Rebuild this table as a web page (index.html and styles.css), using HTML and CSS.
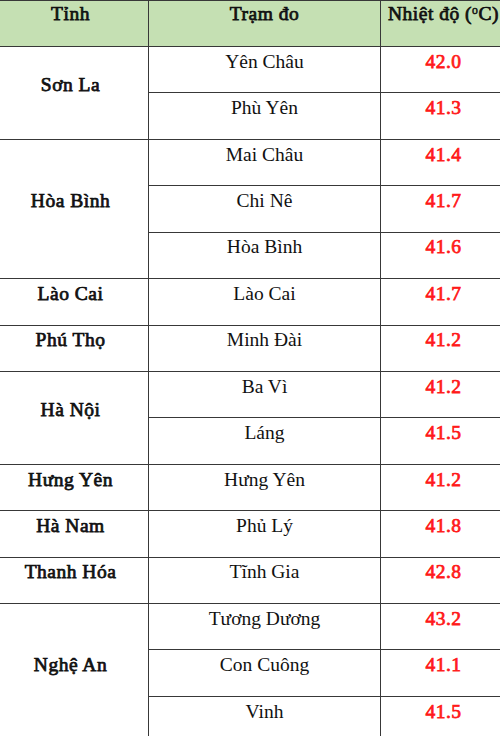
FILE: index.html
```html
<!DOCTYPE html>
<html lang="vi">
<head>
<meta charset="utf-8">
<link rel="stylesheet" href="styles.css">
</head>
<body>
<div class="frame">
<table class="temps">
  <colgroup>
    <col class="c1"><col class="c2"><col class="c3">
  </colgroup>
  <thead>
    <tr><th>Tỉnh</th><th>Trạm đo</th><th>Nhiệt độ (<sup>o</sup>C)</th></tr>
  </thead>
  <tbody>
    <tr><td class="prov" rowspan="2">Sơn La</td><td>Yên Châu</td><td class="val">42.0</td></tr>
    <tr><td>Phù Yên</td><td class="val">41.3</td></tr>
    <tr><td class="prov" rowspan="3">Hòa Bình</td><td>Mai Châu</td><td class="val">41.4</td></tr>
    <tr><td>Chi Nê</td><td class="val">41.7</td></tr>
    <tr><td>Hòa Bình</td><td class="val">41.6</td></tr>
    <tr><td class="prov">Lào Cai</td><td>Lào Cai</td><td class="val">41.7</td></tr>
    <tr><td class="prov">Phú Thọ</td><td>Minh Đài</td><td class="val">41.2</td></tr>
    <tr><td class="prov" rowspan="2">Hà Nội</td><td>Ba Vì</td><td class="val">41.2</td></tr>
    <tr><td>Láng</td><td class="val">41.5</td></tr>
    <tr><td class="prov">Hưng Yên</td><td>Hưng Yên</td><td class="val">41.2</td></tr>
    <tr><td class="prov">Hà Nam</td><td>Phủ Lý</td><td class="val">41.8</td></tr>
    <tr><td class="prov">Thanh Hóa</td><td>Tĩnh Gia</td><td class="val">42.8</td></tr>
    <tr><td class="prov" rowspan="3">Nghệ An</td><td>Tương Dương</td><td class="val">43.2</td></tr>
    <tr><td>Con Cuông</td><td class="val">41.1</td></tr>
    <tr><td>Vinh</td><td class="val">41.5</td></tr>
  </tbody>
</table>
</div>
</body>
</html>
```
FILE: styles.css
```css
html, body {
  margin: 0;
  padding: 0;
  background: #ffffff;
}
.frame {
  width: 500px;
  height: 736px;
  overflow: hidden;
}
.temps {
  border-collapse: collapse;
  table-layout: fixed;
  width: 514px;
  margin-left: -8px;
  font-family: "Liberation Serif", "Times New Roman", serif;
  font-size: 19.5px;
  color: #111;
}
.c1 { width: 156px; }
.c2 { width: 232px; }
.c3 { width: 126px; }
.temps th,
.temps td {
  border: 1.5px solid #383838;
  text-align: center;
  vertical-align: middle;
  line-height: 22px;
  padding: 0 0 16px 0;
}
.temps thead tr { height: 46px; }
.temps tbody tr { height: 46.43px; }
.temps th {
  background: #c5e0b3;
  padding-bottom: 20px;
}
.temps th,
.prov,
.val {
  font-family: "Liberation Serif", "Times New Roman", serif;
  font-weight: normal;
  -webkit-text-stroke: 0.75px currentColor;
  letter-spacing: 0.5px;
}
.temps sup {
  font-size: 0.6em;
  line-height: 0;
  vertical-align: 0.55em;
  -webkit-text-stroke: 0.5px currentColor;
}
.val {
  color: #ff1a1a;
}
```
